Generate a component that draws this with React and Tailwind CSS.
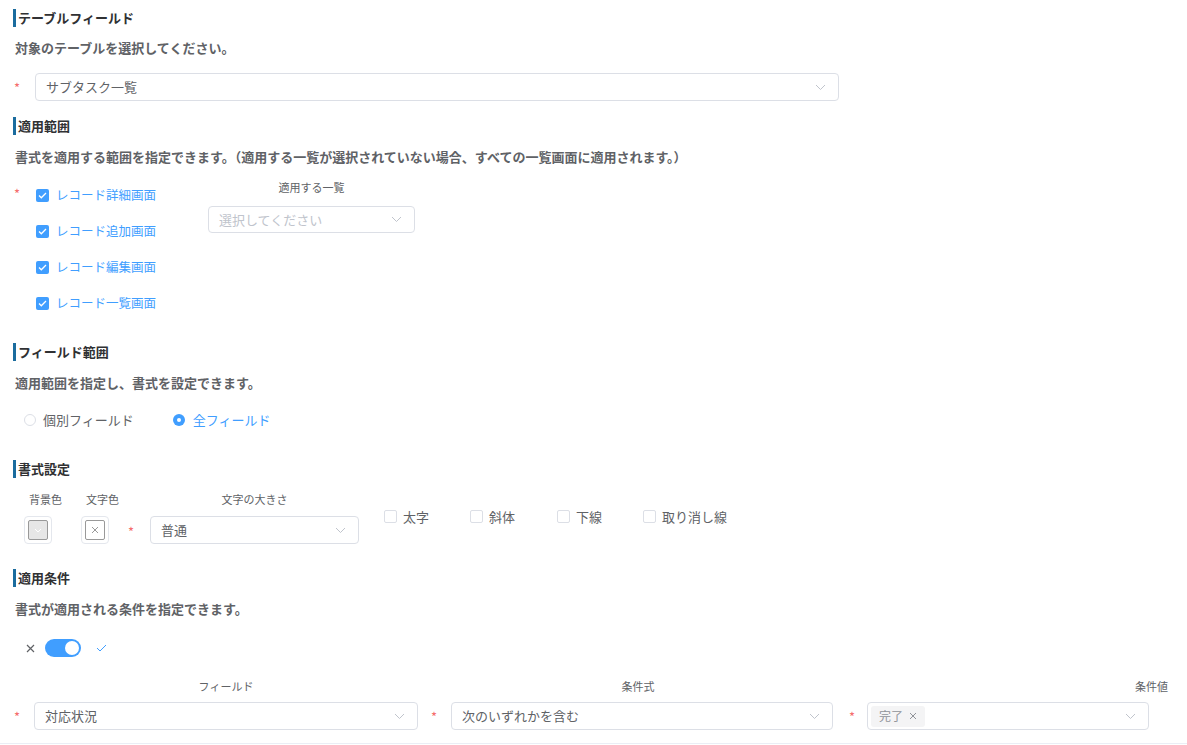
import React from 'react';

const font = { fontFamily: '"Noto Sans CJK JP", "Noto Sans", sans-serif' };

function Chevron({ className = '' }) {
  return (
    <svg width="11" height="7" viewBox="0 0 11 7" className={className}>
      <path d="M1 1l4.5 4.5L10 1" fill="none" stroke="#c0c4cc" strokeWidth="1" />
    </svg>
  );
}

function Section({ title }) {
  return (
    <div className="flex items-center h-5 pl-[13px]">
      <span className="w-[3px] h-[18px] bg-[#1b6c9e]" />
      <span className="ml-[2px] text-[13px] font-bold text-[#303133]">{title}</span>
    </div>
  );
}

function Desc({ children, className = '' }) {
  return (
    <div className={`h-5 flex items-center pl-[15px] text-[13px] font-bold text-[#606266] ${className}`}>{children}</div>
  );
}

function Star({ className = '' }) {
  return <span className={`text-[#f56c6c] text-[13px] leading-none ${className}`}>*</span>;
}

function Select({ value, placeholder, className = '' }) {
  return (
    <div className={`flex items-center justify-between border border-[#dcdfe6] rounded-[4px] bg-white pl-[10px] pr-[12px] ${className}`}>
      <span className={`text-[13px] ${value ? 'text-[#606266]' : 'text-[#c0c4cc]'}`}>{value || placeholder}</span>
      <Chevron />
    </div>
  );
}

function Check({ label }) {
  return (
    <div className="h-9 flex items-center">
      <span className="w-[13px] h-[13px] rounded-[2px] bg-[#409eff] flex items-center justify-center">
        <svg width="9" height="7" viewBox="0 0 9 7">
          <path d="M1 3.5l2.3 2.3L8 1" fill="none" stroke="#fff" strokeWidth="1.3" />
        </svg>
      </span>
      <span className="ml-[7px] text-[12.5px] text-[#409eff]">{label}</span>
    </div>
  );
}

function Box({ label, className = '' }) {
  return (
    <div className={`flex items-center ${className}`}>
      <span className="w-[13px] h-[13px] rounded-[2px] border border-[#dcdfe6] bg-white" />
      <span className="ml-[6px] text-[13px] text-[#606266]">{label}</span>
    </div>
  );
}

export default function App() {
  return (
    <div className="w-[1187px] h-[745px] bg-white overflow-hidden" style={font}>
      <div className="pt-[8px] border-b border-[#ebeef5] pb-[13px]">
        <Section title="テーブルフィールド" />
        <Desc className="mt-[10px]">対象のテーブルを選択してください。</Desc>
        <div className="flex items-start mt-[15px] pl-[14px]">
          <Star className="mt-[8px] w-[21px]" />
          <Select value="サブタスク一覧" className="w-[804px] h-[28px]" />
        </div>

        <div className="mt-[15px]"><Section title="適用範囲" /></div>
        <Desc className="mt-[11px]">書式を適用する範囲を指定できます。（適用する一覧が選択されていない場合、すべての一覧画面に適用されます。）</Desc>
        <div className="flex items-start mt-[10px] pl-[14px]">
          <Star className="mt-[10px] w-[22px]" />
          <div className="flex flex-col w-[172px]">
            <Check label="レコード詳細画面" />
            <Check label="レコード追加画面" />
            <Check label="レコード編集画面" />
            <Check label="レコード一覧画面" />
          </div>
          <div className="flex flex-col w-[207px]">
            <div className="h-5 flex items-center justify-center text-[11px] text-[#606266]">適用する一覧</div>
            <Select placeholder="選択してください" className="mt-[9px] h-[27px]" />
          </div>
        </div>

        <div className="mt-[21px]"><Section title="フィールド範囲" /></div>
        <Desc className="mt-[11px]">適用範囲を指定し、書式を設定できます。</Desc>
        <div className="flex items-center h-5 mt-[17px] pl-[24px]">
          <span className="w-[12px] h-[12px] rounded-full border border-[#dcdfe6] bg-white" />
          <span className="ml-[7px] text-[13px] text-[#606266]">個別フィールド</span>
          <span className="ml-[39px] w-[12px] h-[12px] rounded-full bg-[#409eff] flex items-center justify-center">
            <span className="w-[4px] h-[4px] rounded-full bg-white" />
          </span>
          <span className="ml-[8px] text-[13px] text-[#409eff]">全フィールド</span>
        </div>

        <div className="mt-[29px]"><Section title="書式設定" /></div>
        <div className="flex items-start mt-[10px] pl-[24px]">
          <div className="flex flex-col w-[28px]">
            <div className="h-5 flex items-center ml-[5px] text-[11px] text-[#606266] whitespace-nowrap">背景色</div>
            <div className="mt-[7px] w-[28px] h-[28px] border border-[#e4e7ed] rounded-[4px] flex items-center justify-center">
              <span className="w-[20px] h-[20px] border border-[#999] bg-[#e6e6e6] rounded-[2px] flex items-center justify-center">
                <svg width="8" height="5" viewBox="0 0 8 5"><path d="M1 1l3 3 3-3" fill="none" stroke="#fff" strokeWidth="1" /></svg>
              </span>
            </div>
          </div>
          <div className="flex flex-col w-[28px] ml-[29px]">
            <div className="h-5 flex items-center ml-[5px] text-[11px] text-[#606266] whitespace-nowrap">文字色</div>
            <div className="mt-[7px] w-[28px] h-[28px] border border-[#e4e7ed] rounded-[4px] flex items-center justify-center">
              <span className="w-[20px] h-[20px] border border-[#999] bg-white rounded-[2px] flex items-center justify-center">
                <svg width="8" height="8" viewBox="0 0 8 8"><path d="M1 1l6 6M7 1l-6 6" fill="none" stroke="#999" strokeWidth="1" /></svg>
              </span>
            </div>
          </div>
          <Star className="ml-[19px] mt-[36px] w-[22px]" />
          <div className="flex flex-col w-[209px]">
            <div className="h-5 flex items-center justify-center text-[11px] text-[#606266]">文字の大きさ</div>
            <Select value="普通" className="mt-[7px] h-[28px]" />
          </div>
          <div className="flex items-center mt-[18px] ml-[25px]">
            <Box label="太字" />
            <Box label="斜体" className="ml-[41px]" />
            <Box label="下線" className="ml-[42px]" />
            <Box label="取り消し線" className="ml-[41px]" />
          </div>
        </div>

        <div className="mt-[24px]"><Section title="適用条件" /></div>
        <Desc className="mt-[11px]">書式が適用される条件を指定できます。</Desc>
        <div className="flex items-center h-5 mt-[19px] pl-[26px]">
          <svg width="9" height="9" viewBox="0 0 9 9"><path d="M1 1l7 7M8 1l-7 7" fill="none" stroke="#606266" strokeWidth="1.2" /></svg>
          <span className="ml-[10px] w-[36px] h-[18px] rounded-full bg-[#409eff] flex items-center justify-end pr-[2px]">
            <span className="w-[14px] h-[14px] rounded-full bg-white" />
          </span>
          <svg width="11" height="8" viewBox="0 0 11 8" className="ml-[15px]"><path d="M1 4l3 3 6-6" fill="none" stroke="#409eff" strokeWidth="1" /></svg>
        </div>
        <div className="flex items-start mt-[18px] pl-[14px]">
          <div className="flex items-start">
            <Star className="mt-[34px] w-[20px]" />
            <div className="flex flex-col w-[384px]">
              <div className="h-5 flex items-center justify-center text-[11px] text-[#606266]">フィールド</div>
              <Select value="対応状況" className="mt-[6px] h-[28px]" />
            </div>
          </div>
          <div className="flex items-start ml-[13px]">
            <Star className="mt-[34px] w-[20px]" />
            <div className="flex flex-col w-[382px]">
              <div className="h-5 flex items-center justify-center text-[11px] text-[#606266] pr-[8px]">条件式</div>
              <Select value="次のいずれかを含む" className="mt-[6px] h-[28px]" />
            </div>
          </div>
          <div className="flex items-start ml-[16px] flex-1">
            <Star className="mt-[34px] w-[18px]" />
            <div className="flex flex-col flex-1">
              <div className="h-5 flex items-center justify-end pr-[19px] text-[11px] text-[#606266]">条件値</div>
              <div className="mt-[6px] w-[282px] h-[28px] border border-[#dcdfe6] rounded-[4px] bg-white flex items-center justify-between pl-[3px] pr-[12px]">
                <span className="h-[21px] px-[8px] rounded-[3px] bg-[#f4f4f5] flex items-center text-[12px] text-[#909399]">
                  完了
                  <svg width="8" height="8" viewBox="0 0 8 8" className="ml-[6px]"><path d="M1 1l6 6M7 1l-6 6" fill="none" stroke="#909399" strokeWidth="1" /></svg>
                </span>
                <Chevron />
              </div>
            </div>
          </div>
        </div>
      </div>
    </div>
  );
}
